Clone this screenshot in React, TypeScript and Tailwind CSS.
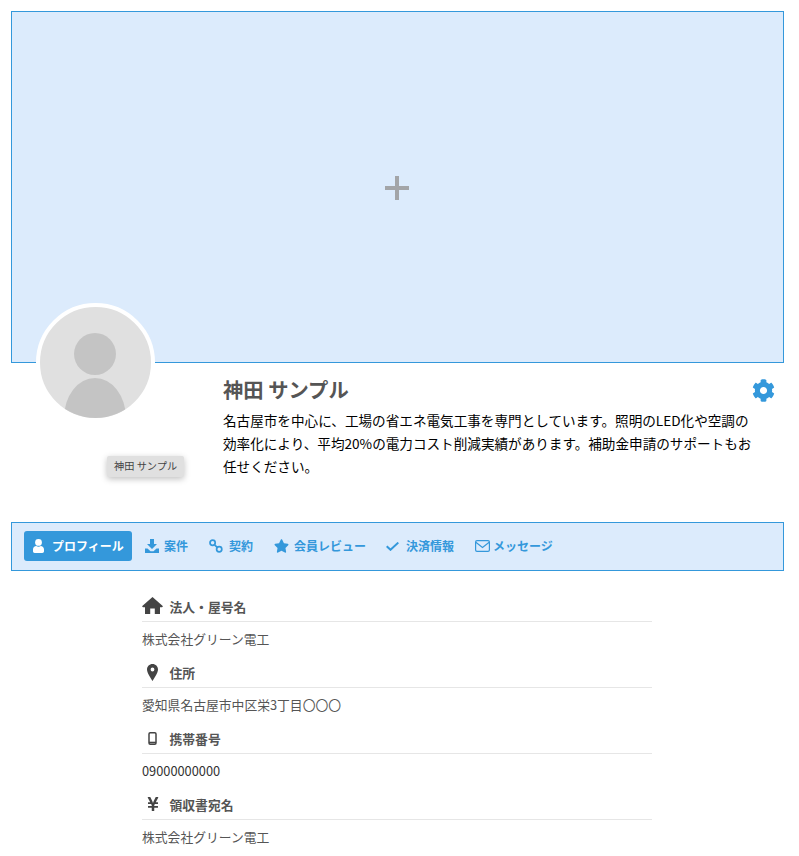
import { FaCog, FaYenSign, FaStar } from "react-icons/fa";
import type { ReactNode } from "react";

const FONT = "font-['Noto_Sans_CJK_JP',sans-serif]";

const IconDownload = () => (
  <svg width="14" height="14" viewBox="0 0 14 14" fill="currentColor">
    <path d="M5 0h4v5h3L7 10 2 5h3z" />
    <path d="M0 9.5h2.5L5.5 12.3h3L11.5 9.5H14V14H0z" />
  </svg>
);

const IconLink = () => (
  <svg width="14" height="14" viewBox="0 0 14 14" fill="none" stroke="currentColor" strokeWidth="1.7">
    <circle cx="3.6" cy="3.8" r="2.6" />
    <circle cx="10.2" cy="10.2" r="2.6" />
    <path d="M5.6 5.8l2.6 2.5" />
  </svg>
);

const IconCheck = () => (
  <svg width="13" height="9" viewBox="0 0 13 9" fill="none" stroke="currentColor" strokeWidth="2">
    <path d="M0.7 4.2l3.8 3.6 7.8-7.2" />
  </svg>
);

const IconMail = () => (
  <svg width="15" height="12" viewBox="0 0 15 12" fill="none" stroke="currentColor" strokeWidth="1.2">
    <rect x="0.6" y="0.6" width="13.8" height="10.8" rx="1.4" />
    <path d="M0.8 2.2l6.700 5.2 6.700-5.2" />
  </svg>
);

const IconUser = () => (
  <svg width="11" height="14" viewBox="0 0 11 14" fill="currentColor">
    <circle cx="5.5" cy="3.4" r="3.4" />
    <path d="M0 10.5C0 8.3 1.6 7 3.2 7c.7.5 1.4.8 2.3.8S7.100 7.500 7.800 7C9.400 7 11 8.300 11 10.500V12.300C11 13.300 10.300 14 9.300 14H1.700C.7 14 0 13.300 0 12.300z" />
  </svg>
);

const IconHome = () => (
  <svg width="21" height="17" viewBox="0 0 21 17" fill="currentColor" className="-mt-[2px]">
    <path d="M10.500 0L21 9.200 20 10.300H18V17H12.800V11.500H8.200V17H3V10.300H1L0 9.200z" />
  </svg>
);

const IconPin = () => (
  <svg width="11" height="17" viewBox="0 0 11 17" fill="currentColor" fillRule="evenodd">
    <path d="M5.500 0C8.600 0 11 2.400 11 5.500 11 9 7.500 13.500 5.500 17 3.500 13.500 0 9 0 5.500 0 2.400 2.400 0 5.500 0zM5.500 3.600a1.900 1.900 0 1 0 0 3.800 1.900 1.900 0 0 0 0-3.800z" />
  </svg>
);

const IconMobile = () => (
  <svg width="9" height="13" viewBox="0 0 9 13" fill="none" stroke="currentColor">
    <rect x="1" y="0.800" width="7" height="11.400" rx="1.200" strokeWidth="1.500" />
    <path d="M1 10.500h7" strokeWidth="1.600" />
  </svg>
);

const TABS: { label: string; icon: ReactNode; cls: string }[] = [
  { label: "案件", icon: <IconDownload />, cls: "gap-[5px]" },
  { label: "契約", icon: <IconLink />, cls: "gap-[6px]" },
  { label: "会員レビュー", icon: <FaStar className="h-[14px] w-[15px]" />, cls: "gap-[5px]" },
  { label: "決済情報", icon: <IconCheck />, cls: "-ml-[1px] gap-[7px]" },
  { label: "メッセージ", icon: <IconMail />, cls: "gap-[3px]" },
];

const FIELDS: { label: string; value: string; icon: ReactNode; dark?: boolean }[] = [
  { label: "法人・屋号名", value: "株式会社グリーン電工", icon: <IconHome /> },
  { label: "住所", value: "愛知県名古屋市中区栄3丁目〇〇〇", icon: <IconPin /> },
  { label: "携帯番号", value: "09000000000", icon: <IconMobile />, dark: true },
  { label: "領収書宛名", value: "株式会社グリーン電工", icon: <FaYenSign className="-mt-[1px] h-[16px] w-[12px]" /> },
];

export default function App() {
  return (
    <div className={`${FONT} h-[856px] w-[799px] overflow-hidden bg-white pt-[11px] pl-[11px]`}>
      <div className="relative w-[773px]">
        <div className="flex h-[352px] items-center justify-center border border-[#3498db] bg-[#dcebfc]">
          <svg width="24" height="24" viewBox="0 0 24 24" className="mt-[1px] mr-[2px] text-[#a3a5a8]">
            <path d="M10 0h4v10h10v4H14v10h-4V14H0v-4h10z" fill="currentColor" />
          </svg>
        </div>

        {/* Avatar sits over the banner edge */}
        <div className="absolute top-[292px] left-[25px] h-[119px] w-[119px] overflow-hidden rounded-full border-4 border-white bg-[#e0e0e0]">
          <svg viewBox="0 0 111 111" className="h-full w-full">
            <circle cx="55" cy="47" r="21" fill="#c4c4c4" />
            <ellipse cx="55" cy="111" rx="31" ry="40" fill="#c4c4c4" />
          </svg>
        </div>

        <div className="flex h-[159px]">
          <div className="relative w-[212px] shrink-0">
            <span className="absolute top-[93px] left-[96px] rounded-[2px] bg-[#e0e0e0] px-[7px] pt-[1px] pb-[3px] text-[10.2px] leading-[17px] whitespace-nowrap text-[#444] shadow-[0_2px_6px_rgba(0,0,0,0.25)]">
              神田 サンプル
            </span>
          </div>
          <div className="w-[532px] pt-[11px]">
            <h1 className="text-[20.3px] leading-[30px] font-bold text-[#555]">神田 サンプル</h1>
            <p className="mt-[5px] text-[13.6px] leading-[23px] text-black">
              名古屋市を中心に、工場の省エネ電気工事を専門としています。照明のLED化や空調の効率化により、平均20%の電力コスト削減実績があります。補助金申請のサポートもお任せください。
            </p>
          </div>
          <FaCog className="mt-[16px] ml-[-3px] h-[23px] w-[23px] text-[#3498db]" />
        </div>

        <nav className="flex h-[49px] items-center border border-[#3498db] bg-[#dcebfc] pb-[1px] pl-[12px] text-[12px] font-bold text-[#3498db]">
          <a className="flex h-[30px] w-[108px] items-center gap-[8px] rounded-[3px] bg-[#3498db] pl-[9px] text-white">
            <IconUser />
            プロフィール
          </a>
          <div className="ml-[13px] flex items-center gap-[21px]">
            {TABS.map((t) => (
              <a key={t.label} className={`flex items-center ${t.cls}`}>
                {t.icon}
                {t.label}
              </a>
            ))}
          </div>
        </nav>

        <div className="mt-[21px] ml-[131px] w-[510px]">
          {FIELDS.map((f) => (
            <div key={f.label} className="h-[66px]">
              <div className="flex h-[30px] items-center border-b border-[#e6e6e6] text-[12.8px] font-bold text-[#555]">
                <span className="flex w-[21px] justify-center text-[#444]">{f.icon}</span>
                <span className="ml-[6.500px]">{f.label}</span>
              </div>
              <div className={`pt-[8px] text-[12.8px] leading-[18px] ${f.dark ? "text-[#333]" : "text-[#555]"}`}>{f.value}</div>
            </div>
          ))}
        </div>
      </div>
    </div>
  );
}
